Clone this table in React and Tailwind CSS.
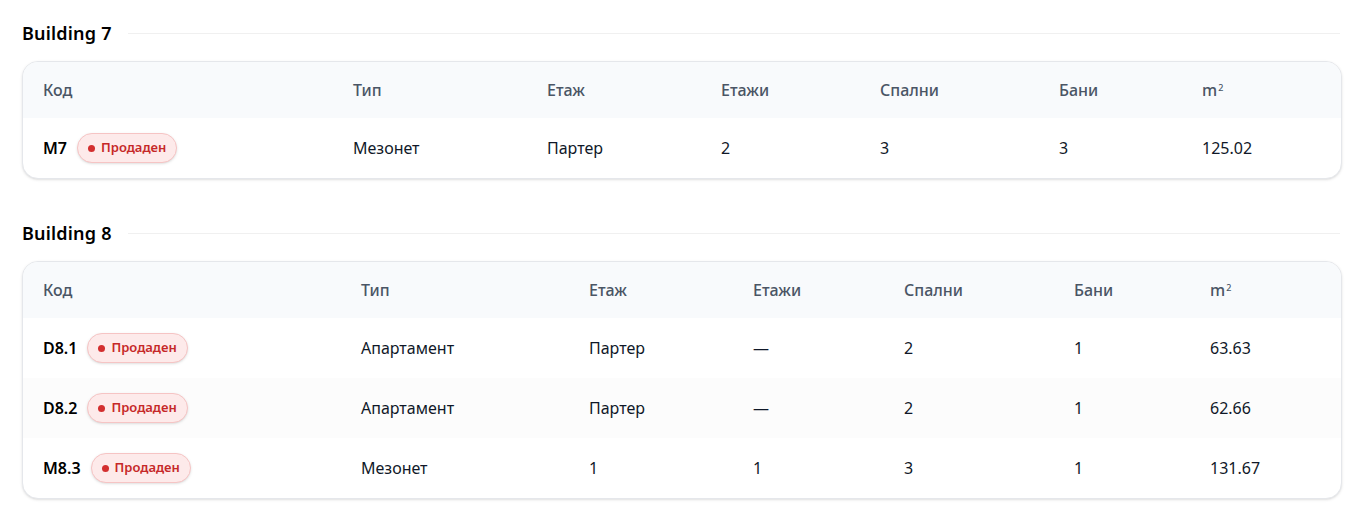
import React from 'react';

const buildings = [
  {
    name: 'Building 7',
    widths: ['w-[310px]', 'w-[194px]', 'w-[174px]', 'w-[159px]', 'w-[179px]', 'w-[143px]', ''],
    rows: [
      { code: 'M7', type: 'Мезонет', floor: 'Партер', floors: '2', beds: '3', baths: '3', area: '125.02' },
    ],
  },
  {
    name: 'Building 8',
    widths: ['w-[318px]', 'w-[228px]', 'w-[164px]', 'w-[151px]', 'w-[170px]', 'w-[136px]', ''],
    rows: [
      { code: 'D8.1', type: 'Апартамент', floor: 'Партер', floors: '—', beds: '2', baths: '1', area: '63.63' },
      { code: 'D8.2', type: 'Апартамент', floor: 'Партер', floors: '—', beds: '2', baths: '1', area: '62.66' },
      { code: 'M8.3', type: 'Мезонет', floor: '1', floors: '1', beds: '3', baths: '1', area: '131.67' },
    ],
  },
];

const SoldBadge = () => (
  <span className="inline-flex items-center gap-[6px] h-[30px] px-[10px] rounded-full border border-[#f6c4c4] bg-[#fdeaea] text-[13px] font-semibold text-[#c62828] shadow-sm">
    <span className="w-[7px] h-[7px] rounded-full bg-[#d32f2f]" />
    Продаден
  </span>
);

const BuildingTable = ({ building }) => {
  const heads = ['Код', 'Тип', 'Етаж', 'Етажи', 'Спални', 'Бани'];
  return (
    <section>
      <div className="flex items-center gap-4 h-[24px]">
        <h2 className="text-[18px] font-semibold text-black whitespace-nowrap tracking-[0.2px]">{building.name}</h2>
        <div className="flex-1 h-px bg-[#f0f0f0] mr-[2px]" />
      </div>
      <div className="mt-[16px] rounded-2xl border border-gray-200 bg-white shadow-sm overflow-hidden">
        <table className="w-full table-fixed text-left text-[16px]">
          <thead className="bg-[#f8fafc]">
            <tr className="h-[56px]">
              {heads.map((h, i) => (
                <th key={h} className={`${building.widths[i]} px-5 font-medium text-gray-600`}>{h}</th>
              ))}
              <th className="px-5 font-medium text-gray-600">
                m<sup className="text-[9px] relative -top-[5px] ml-[1px]">2</sup>
              </th>
            </tr>
          </thead>
          <tbody>
            {building.rows.map((r, i) => (
              <tr key={r.code} className={`h-[60px] ${i % 2 === 1 ? 'bg-[#fcfcfc]' : ''}`}>
                <td className="px-5">
                  <div className="flex items-center gap-2.5">
                    <span className="font-semibold text-black">{r.code}</span>
                    <SoldBadge />
                  </div>
                </td>
                <td className="px-5 text-gray-900">{r.type}</td>
                <td className="px-5 text-gray-900">{r.floor}</td>
                <td className="px-5 text-gray-900">{r.floors}</td>
                <td className="px-5 text-gray-900">{r.beds}</td>
                <td className="px-5 text-gray-900">{r.baths}</td>
                <td className="px-5 text-gray-900">{r.area}</td>
              </tr>
            ))}
          </tbody>
        </table>
      </div>
    </section>
  );
};

export default function App() {
  return (
    <div className="min-h-screen bg-white pl-[22px] pr-[12px] pt-[21px] pb-4 font-['Noto_Sans',sans-serif]">
      <div className="flex flex-col gap-[42px]">
        {buildings.map((b) => (
          <BuildingTable key={b.name} building={b} />
        ))}
      </div>
    </div>
  );
}
